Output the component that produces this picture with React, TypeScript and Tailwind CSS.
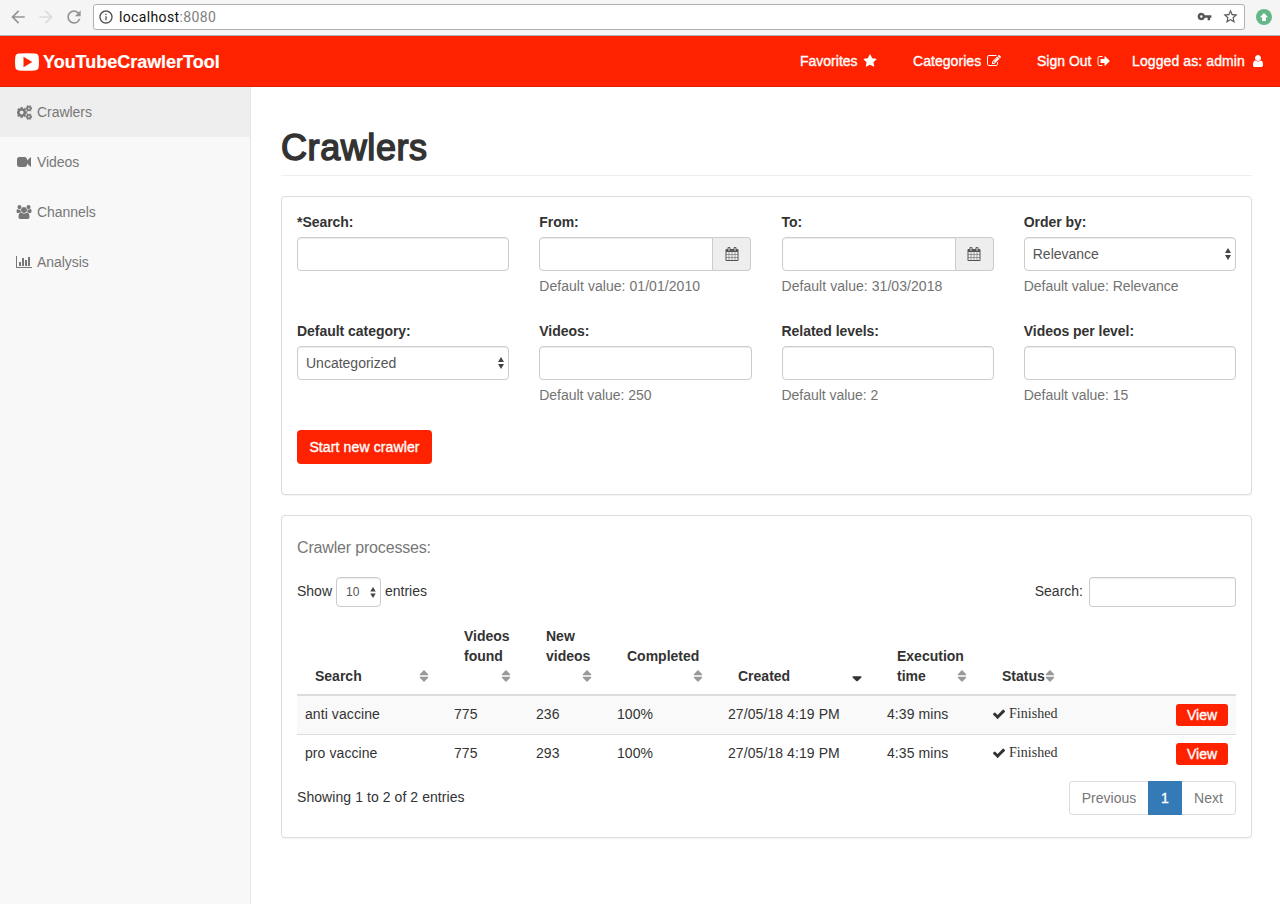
import type { ReactNode } from "react";
import {
  MdArrowBack,
  MdArrowForward,
  MdRefresh,
  MdInfoOutline,
  MdVpnKey,
  MdStarBorder,
} from "react-icons/md";

const GEAR_SMALL =
  "v140q0 16-149 31-12 27-30 52 51 113 51 138 0 4-4 7-122 71-124 71-8 0-46-47t-52-68q-20 2-30 2t-30-2q-14 21-52 68t-46 47q-2 0-124-71-4-3-4-7 0-25 51-138-18-25-30-52-149-15-149-31v-140q0-16 149-31 13-29 30-52-51-113-51-138 0-4 4-7 4-2 35-20t59-34 30-16q8 0 46 46.5t52 67.5q20-2 30-2t30 2q51-71 92-112l6-2q4 0 124 70 4 3 4 7 0 25-51 138 17 23 30 52 149 15 149 31z";

const ICONS = {
  star: "M1728 647q0 22-26 48l-363 354 86 500q1 7 1 20 0 21-10.5 35.5t-30.5 14.5q-19 0-40-12l-449-236-449 236q-22 12-40 12-21 0-31.5-14.5t-10.5-35.5q0-6 2-20l86-500-364-354q-25-27-25-48 0-37 56-46l502-73 225-455q19-41 49-41t49 41l225 455 502 73q56 9 56 46z",
  user: "M1536 1399q0 109-62.5 187t-150.5 78h-854q-88 0-150.5-78t-62.5-187q0-85 8.5-160.5t31.5-152 58.5-131 94-89 134.5-34.5q131 128 313 128t313-128q76 0 134.5 34.5t94 89 58.5 131 31.5 152 8.5 160.5zm-256-887q0 159-112.5 271.5t-271.5 112.5-271.5-112.5-112.5-271.5 112.5-271.5 271.5-112.5 271.5 112.5 112.5 271.5z",
  signOut:
    "M704 1440q0 4 1 20t.5 26.5-3 23.5-10 19.5-20.5 6.5h-320q-119 0-203.5-84.5t-84.5-203.5v-704q0-119 84.5-203.5t203.5-84.5h320q13 0 22.5 9.5t9.5 22.5q0 4 1 20t.5 26.5-3 23.5-10 19.5-20.5 6.5h-320q-66 0-113 47t-47 113v704q0 66 47 113t113 47h312l11.5 1 11.5 3 8 5.5 7 9 2 13.5zm928-544q0 26-19 45l-544 544q-19 19-45 19t-45-19-19-45v-288h-448q-26 0-45-19t-19-45v-384q0-26 19-45t45-19h448v-288q0-26 19-45t45-19 45 19l544 544q19 19 19 45z",
  edit: "M888 1184l116-116-152-152-116 116v56h96v96h56zm440-720q-16-16-33 1l-350 350q-17 17-1 33t33-1l350-350q17-17 1-33zm80 594v190q0 119-84.5 203.5t-203.5 84.5h-832q-119 0-203.5-84.5t-84.5-203.5v-832q0-119 84.5-203.5t203.5-84.5h832q63 0 117 25 15 7 18 23 3 17-9 29l-49 49q-14 14-32 8-23-6-45-6h-832q-66 0-113 47t-47 113v832q0 66 47 113t113 47h832q66 0 113-47t47-113v-126q0-13 9-22l64-64q15-15 35-7t20 29zm-96-738l288 288-672 672h-288v-288zm444 132l-92 92-288-288 92-92q28-28 68-28t68 28l152 152q28 28 28 68t-28 68z",
  check:
    "M1671 566q0 40-28 68l-724 724-136 136q-28 28-68 28t-68-28l-136-136-362-362q-28-28-28-68t28-68l136-136q28-28 68-28t68 28l294 295 656-657q28-28 68-28t68 28l136 136q28 28 28 68z",
  calendar:
    "M192 1664h288v-288h-288v288zm352 0h320v-288h-320v288zm-352-352h288v-320h-288v320zm352 0h320v-320h-320v320zm-352-384h288v-288h-288v288zm736 736h320v-288h-320v288zm-384-736h320v-288h-320v288zm768 736h288v-288h-288v288zm-384-352h320v-320h-320v320zm-352-864v-288q0-13-9.5-22.5t-22.5-9.5h-64q-13 0-22.5 9.5t-9.5 22.5v288q0 13 9.5 22.5t22.5 9.5h64q13 0 22.5-9.5t9.5-22.5zm736 864h288v-320h-288v320zm-384-384h320v-288h-320v288zm384 0h288v-288h-288v288zm32-480v-288q0-13-9.5-22.5t-22.5-9.5h-64q-13 0-22.5 9.5t-9.5 22.5v288q0 13 9.5 22.5t22.5 9.5h64q13 0 22.5-9.5t9.5-22.5zm384-64v1280q0 52-38 90t-90 38h-1408q-52 0-90-38t-38-90v-1280q0-52 38-90t90-38h128v-96q0-66 47-113t113-47h64q66 0 113 47t47 113v96h384v-96q0-66 47-113t113-47h64q66 0 113 47t47 113v96h128q52 0 90 38t38 90z",
  chart:
    "M640 896v512h-256v-512h256zm384-512v1024h-256v-1024h256zm1024 1152v128h-2048v-1536h128v1408h1920zm-640-896v768h-256v-768h256zm384-384v1152h-256v-1152h256z",
  video:
    "M1792 352v1088q0 42-39 59-13 5-25 5-27 0-45-19l-403-403v166q0 119-84.5 203.5t-203.5 84.5h-704q-119 0-203.5-84.5t-84.5-203.5v-704q0-119 84.5-203.5t203.5-84.5h704q119 0 203.5 84.5t84.5 203.5v165l403-402q18-19 45-19 12 0 25 5 39 17 39 59z",
  users:
    "M657 896q-162 5-265 128h-134q-82 0-138-40.5t-56-118.5q0-353 124-353 6 0 43.5 21t97.5 42.5 119 21.5q67 0 133-23-5 37-5 66 0 159 93 290zm1071 637q0 120-73 189.5t-194 69.5h-874q-121 0-194-69.5t-73-189.5q0-53 3.5-103.5t14-109 26.5-108.5 43-97.5 62-81 85.5-53.5 111.5-20q10 0 43 21.5t73 48 107 48 135 21.5 135-21.5 107-48 73-48 43-21.5q61 0 111.5 20t85.5 53.5 62 81 43 97.5 26.5 108.5 14 109 3.5 103.5zm-1024-1277q0 106-75 181t-181 75-181-75-75-181 75-181 181-75 181 75 75 181zm704 384q0 159-112.5 271.5t-271.5 112.5-271.5-112.5-112.5-271.5 112.5-271.5 271.5-112.5 271.5 112.5 112.5 271.5zm576 225q0 78-56 118.5t-138 40.5h-134q-103-123-265-128 93-131 93-290 0-29-5-66 66 23 133 23 59 0 119-21.5t97.5-42.5 43.5-21q124 0 124 353zm-128-609q0 106-75 181t-181 75-181-75-75-181 75-181 181-75 181 75 75 181z",
  cogs:
    "M832 896q0-106-75-181t-181-75-181 75-75 181 75 181 181 75 181-75 75-181zm768 512q0-52-38-90t-90-38-90 38-38 90q0 53 37.5 90.5t90.5 37.5 90.5-37.5 37.5-90.5zm0-1024q0-52-38-90t-90-38-90 38-38 90q0 53 37.5 90.5t90.5 37.5 90.5-37.5 37.5-90.5zm-384 421v185q0 10-7 19.5t-16 10.5l-155 24q-11 35-32 76 34 48 90 115 7 11 7 20 0 12-7 19-23 30-82.5 89.5t-78.5 59.5q-11 0-21-7l-115-90q-37 19-77 31-11 108-23 155-7 24-30 24h-186q-11 0-20-7.5t-10-17.5l-23-153q-34-10-75-31l-118 89q-7 7-20 7-11 0-21-8-144-133-144-160 0-9 7-19 10-14 41-53t47-61q-23-44-35-82l-152-24q-10-1-17-9.5t-7-19.5v-185q0-10 7-19.5t16-10.5l155-24q11-35 32-76-34-48-90-115-7-11-7-20 0-12 7-20 22-30 82-89t79-59q11 0 21 7l115 90q34-18 77-32 11-108 23-154 7-24 30-24h186q11 0 20 7.5t10 17.5l23 153q34 10 75 31l118-89q8-7 20-7 11 0 21 8 144 133 144 160 0 8-7 19-12 16-42 54t-45 60q23 48 34 82l152 23q10 2 17 10.5t7 19.5zm640 533" +
    GEAR_SMALL +
    "m0-1024" +
    GEAR_SMALL,
};

function Icon({
  name,
  box = 1792,
  className = "",
}: {
  name: keyof typeof ICONS;
  box?: number;
  className?: string;
}) {
  return (
    <svg viewBox={`0 0 ${box} 1792`} fill="currentColor" className={`shrink-0 ${className}`}>
      <path d={ICONS[name]} />
    </svg>
  );
}

function UpDown({ className = "" }: { className?: string }) {
  return (
    <svg viewBox="0 0 6 12" className={`shrink-0 text-[#444] ${className}`} fill="currentColor">
      <path d="M3 0L6 5H0zM3 12L0 7H6z" />
    </svg>
  );
}

function SortIcon({ active = false }: { active?: boolean }) {
  return active ? (
    <svg viewBox="0 0 10 12" className="h-3 w-[10px] shrink-0" fill="#333">
      <path d="M.6 6.200h8.800V7.400L5.500 11.300h-1L.6 7.400z" />
    </svg>
  ) : (
    <svg viewBox="0 0 10 12" className="h-3 w-[10px] shrink-0" fill="#999">
      <path d="M5 0L9.200 4.200V5.200H.8V4.200zM5 12L.8 7.800V6.800H9.200V7.800z" />
    </svg>
  );
}

function BrowserBar() {
  return (
    <div className="flex h-9 items-center border-b border-[#b4b4b4] bg-[#f5f5f5] pb-px font-[Roboto,sans-serif]">
      <MdArrowBack className="ml-[8px] size-5 shrink-0 text-[#959595]" />
      <MdArrowForward className="ml-[8px] size-5 shrink-0 text-[#dcdcdc]" />
      <MdRefresh className="ml-[8px] size-5 shrink-0 text-[#959595]" />
      <div className="mb-px ml-[9px] flex h-[26px] w-[1152px] items-center rounded-[3px] border border-[#b0b0b0] bg-white pl-[4px]">
        <MdInfoOutline className="size-4 shrink-0 text-[#505050]" />
        <span className="ml-[5px] text-[14px] tracking-[0.36px] text-[#111]">
          localhost<span className="text-[#808080]">:8080</span>
        </span>
        <MdVpnKey className="ml-auto size-[15px] shrink-0 text-[#555]" />
        <MdStarBorder className="mr-[5px] ml-[10px] size-[17px] shrink-0 text-[#555]" />
      </div>
      <svg viewBox="0 0 16 16" className="ml-[11px] size-4 shrink-0">
        <circle cx="8" cy="8" r="8" fill="#66b687" />
        <path d="M8 4l4 4.300H9.900V12H6.100V8.300H4z" fill="#fff" />
      </svg>
    </div>
  );
}

const medium = "[-webkit-text-stroke:0.35px_currentColor]";

function TopNav() {
  return (
    <header
      className={`flex h-[51px] items-center border-b border-[#e02000] bg-[#ff2200] text-[14px] leading-5 whitespace-nowrap text-white ${medium}`}
    >
      <svg viewBox="0 0 24 18" className="mt-px ml-[15px] h-[18px] w-6 shrink-0" fill="none">
        <path
          d="M4 .6Q12 0 20 .6Q23.400 .8 23.700 4Q24.200 9 23.700 14Q23.400 17.200 20 17.400Q12 18 4 17.400Q.6 17.200 .3 14Q-.2 9 .3 4Q.6 .8 4 .6z"
          fill="#fff"
        />
        <path d="M8.500 3.800L17.300 9l-8.800 5.200z" fill="#ff2200" />
      </svg>
      <span className="mt-[2px] ml-[4px] w-[177px] text-[18px] font-bold tracking-[-0.02px] [-webkit-text-stroke:0.2px_currentColor]">
        YouTubeCrawlerTool
      </span>
      <a className="ml-[580px] flex w-[113px] items-center">
        <span className="w-[62.500px]">Favorites</span>
        <Icon name="star" className="size-[14px]" />
      </a>
      <a className="flex w-[124px] items-center">
        <span className="w-[73.500px] tracking-[0.05px]">Categories</span>
        <Icon name="edit" className="size-[14px]" />
      </a>
      <a className="flex w-[95px] items-center">
        <span className="w-[60px]">Sign Out</span>
        <Icon name="signOut" className="size-[14px]" />
      </a>
      <a className="flex items-center">
        <span className="w-[119px] tracking-[0.1px]">Logged as: admin</span>
        <Icon name="user" className="size-[14px]" />
      </a>
    </header>
  );
}

function SideItem({ icon, label, active = false }: { icon: ReactNode; label: string; active?: boolean }) {
  return (
    <a
      className={`flex h-[50px] items-center pl-4 text-[14px] leading-5 tracking-[-0.05px] text-[#777] ${
        active ? "bg-[#eee]" : "bg-[#f8f8f8]"
      }`}
    >
      <span className="flex w-[21px] items-center">{icon}</span>
      {label}
    </a>
  );
}

const control =
  "flex h-[34px] items-center rounded-[4px] border border-[#ccc] bg-white shadow-[inset_0_1px_1px_rgba(0,0,0,0.075)]";

function Field({
  label,
  help,
  kind = "text",
  value,
}: {
  label: string;
  help?: string;
  kind?: "text" | "date" | "select";
  value?: string;
}) {
  return (
    <div className="h-[109px]">
      <label className="mb-[5px] block font-bold tracking-[-0.04px]">{label}</label>
      {kind === "text" && <div className={control} />}
      {kind === "date" && (
        <div className="flex w-[212px]">
          <div className={`${control} flex-1 rounded-r-none`} />
          <div className="flex h-[34px] w-[38px] items-center justify-center rounded-r-[4px] border border-l-0 border-[#ccc] bg-[#eee] text-[#555]">
            <Icon name="calendar" className="size-[14px]" />
          </div>
        </div>
      )}
      {kind === "select" && (
        <div className={`${control} justify-between pr-[4px] pl-2 text-[#555]`}>
          {value}
          <UpDown className="h-3 w-[6px]" />
        </div>
      )}
      {help && (
        <p className={`mt-[5px] text-[#737373] ${kind === "date" ? "tracking-[0.05px]" : "tracking-[-0.04px]"}`}>
          {help}
        </p>
      )}
    </div>
  );
}

const columns = [
  { lines: ["Search"], width: 149 },
  { lines: ["Videos", "found", ""], width: 82 },
  { lines: ["New", "videos", ""], width: 81 },
  { lines: ["Completed", ""], width: 111 },
  { lines: ["Created"], width: 159, active: true },
  { lines: ["Execution", "time"], width: 105 },
  { lines: ["Status"], width: 88 },
];

const rows = [
  ["anti vaccine", "775", "236", "100%", "27/05/18 4:19 PM", "4:39 mins"],
  ["pro vaccine", "775", "293", "100%", "27/05/18 4:19 PM", "4:35 mins"],
];

function CrawlerTable() {
  return (
    <table className="mt-[11px] w-full table-fixed border-collapse text-left whitespace-nowrap">
      <colgroup>
        {columns.map((c) => (
          <col key={c.lines[0]} style={{ width: c.width }} />
        ))}
        <col />
      </colgroup>
      <thead>
        <tr className="border-b-2 border-[#ddd]">
          {columns.map((c) => (
            <th key={c.lines[0]} className="h-[77px] pt-2 pr-[17px] pb-[8px] pl-[18px] align-bottom font-bold">
              {c.lines.map((line, i) => (
                <div key={i} className="flex h-5 items-center justify-between">
                  <span>{line}</span>
                  {i === c.lines.length - 1 && <SortIcon active={c.active} />}
                </div>
              ))}
            </th>
          ))}
          <th />
        </tr>
      </thead>
      <tbody>
        {rows.map((r, i) => (
          <tr
            key={r[0]}
            className={i === 0 ? "h-[39px] border-b border-[#ddd] bg-[#f9f9f9] align-top" : "h-[39px] align-top"}
          >
            {r.map((cell, j) => (
              <td key={j} className="p-0 pt-[8px] pl-2 tracking-[0.08px]">
                {cell}
              </td>
            ))}
            <td className="p-0 pt-[8px] pl-2">
              <span className="flex items-center gap-[3px] font-['Liberation_Serif',serif] text-[14px] tracking-[0.05px]">
                <Icon name="check" className="size-[14px]" />
                Finished
              </span>
            </td>
            <td className="p-0 pt-[8px] pr-2">
              <a
                className={`ml-auto flex h-[22px] w-[52px] items-center justify-center rounded-[3px] bg-[#ff2200] text-white ${medium}`}
              >
                View
              </a>
            </td>
          </tr>
        ))}
      </tbody>
    </table>
  );
}

const panel = "rounded-[4px] border border-[#ddd] bg-white px-[15px] shadow-[0_1px_1px_rgba(0,0,0,0.05)]";

export default function App() {
  return (
    <div className="flex h-[904px] w-[1280px] flex-col overflow-hidden bg-white font-['Liberation_Sans',Arial,sans-serif] text-[14px] leading-5 text-[#333]">
      <BrowserBar />
      <TopNav />
      <div className="flex flex-1">
        <nav className="w-[251px] shrink-0 border-r border-[#e7e7e7] bg-[#f8f8f8]">
          <SideItem
            active
            label="Crawlers"
            icon={<Icon name="cogs" box={1856} className="ml-[0.5px] h-[15px] w-[15px] stroke-current stroke-[50]" />}
          />
          <SideItem label="Videos" icon={<Icon name="video" className="ml-[1px] size-[14px]" />} />
          <SideItem label="Channels" icon={<Icon name="users" box={2048} className="h-[14px] w-4" />} />
          <SideItem label="Analysis" icon={<Icon name="chart" box={2048} className="h-[14px] w-4" />} />
        </nav>
        <main className="flex-1 pr-7 pl-[30px]">
          <h1 className="mt-10 h-[49px] border-b border-[#eee] pt-px text-[36px] leading-[40px] font-normal tracking-[0.58px] [-webkit-text-stroke:1.5px_currentColor]">
            Crawlers
          </h1>
          <section className={`mt-5 h-[299px] pt-[15px] ${panel}`}>
            <div className="grid grid-cols-4 gap-x-[30px]">
              <Field label="*Search:" />
              <Field label="From:" kind="date" help="Default value: 01/01/2010" />
              <Field label="To:" kind="date" help="Default value: 31/03/2018" />
              <Field label="Order by:" kind="select" value="Relevance" help="Default value: Relevance" />
              <Field label="Default category:" kind="select" value="Uncategorized" />
              <Field label="Videos:" help="Default value: 250" />
              <Field label="Related levels:" help="Default value: 2" />
              <Field label="Videos per level:" help="Default value: 15" />
            </div>
            <button
              className={`flex h-[34px] w-[135px] items-center justify-center rounded-[4px] bg-[#ff2200] tracking-[0.12px] text-white ${medium}`}
            >
              Start new crawler
            </button>
          </section>
          <section className={`mt-5 h-[323px] pt-[21px] ${panel}`}>
            <h2 className="text-[16px] leading-[22px] tracking-[-0.17px] text-[#777]">Crawler processes:</h2>
            <div className="mt-[18px] flex h-[30px] items-center">
              <span className="mb-[2px] w-[39px]">Show</span>
              <div className="flex h-[30px] w-[45px] items-center justify-between rounded-[4px] border border-[#ccc] pr-[4px] pl-[9px] text-[12px] text-[#555] shadow-[inset_0_1px_1px_rgba(0,0,0,0.075)]">
                10
                <UpDown className="h-[11px] w-[6px]" />
              </div>
              <span className="mb-[2px] ml-[4px]">entries</span>
              <span className="mr-[6px] mb-[2px] ml-auto">Search:</span>
              <div className="h-[30px] w-[147px] rounded-[3px] border border-[#ccc] shadow-[inset_0_1px_1px_rgba(0,0,0,0.075)]" />
            </div>
            <CrawlerTable />
            <div className="mt-2 flex h-[34px] justify-between">
              <span className="mt-[6px] tracking-[0.07px]">Showing 1 to 2 of 2 entries</span>
              <div className="flex h-[34px] text-[#777]">
                <a className="flex w-[79px] items-center justify-center rounded-l-[4px] border border-r-0 border-[#ddd]">
                  Previous
                </a>
                <a className={`flex w-[34px] items-center justify-center bg-[#337ab7] text-white ${medium}`}>1</a>
                <a className="flex w-[54px] items-center justify-center rounded-r-[4px] border border-l-0 border-[#ddd]">
                  Next
                </a>
              </div>
            </div>
          </section>
        </main>
      </div>
    </div>
  );
}
